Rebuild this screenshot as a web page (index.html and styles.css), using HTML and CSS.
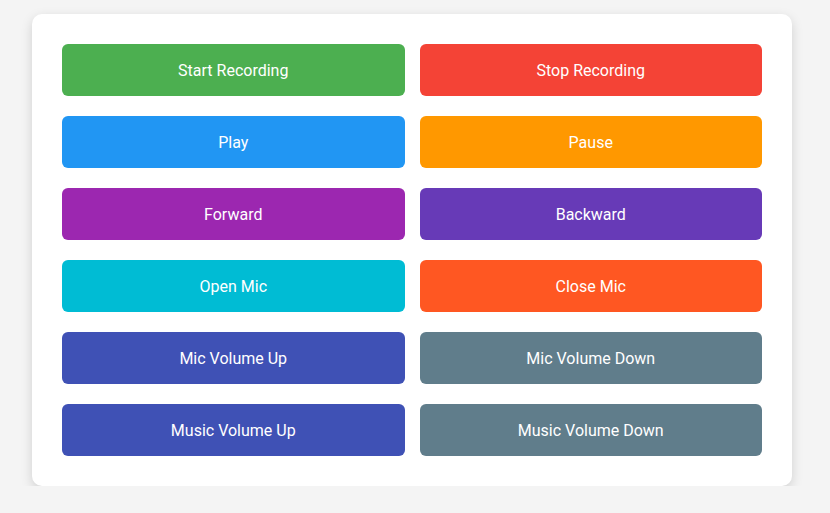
FILE: index.html
```html
<!DOCTYPE html>
<html>
<head>
<meta charset="utf-8">
<link rel="stylesheet" href="styles.css">
</head>
<body>
<div class="card">
  <div class="grid">
    <button class="btn green">Start Recording</button>
    <button class="btn red">Stop Recording</button>
    <button class="btn blue">Play</button>
    <button class="btn orange">Pause</button>
    <button class="btn purple">Forward</button>
    <button class="btn deep-purple">Backward</button>
    <button class="btn cyan">Open Mic</button>
    <button class="btn deep-orange">Close Mic</button>
    <button class="btn indigo">Mic Volume Up</button>
    <button class="btn blue-grey">Mic Volume Down</button>
    <button class="btn indigo">Music Volume Up</button>
    <button class="btn blue-grey">Music Volume Down</button>
  </div>
</div>
</body>
</html>
```
FILE: styles.css
```css
html, body {
  margin: 0;
  padding: 0;
  background: #f4f4f4;
  font-family: Roboto, "Liberation Sans", sans-serif;
}
body {
  padding: 14px 0 0 32px;
}
.card {
  width: 760px;
  box-sizing: border-box;
  padding: 30px;
  background: #fff;
  border-radius: 10px;
  box-shadow: 0 4px 12px rgba(0, 0, 0, 0.15);
}
.grid {
  display: grid;
  grid-template-columns: 1fr 1fr;
  column-gap: 15px;
  row-gap: 20px;
}
.btn {
  height: 52px;
  border: none;
  border-radius: 6px;
  color: #fff;
  font-family: Roboto, "Liberation Sans", sans-serif;
  font-size: 16px;
  display: flex;
  align-items: center;
  justify-content: center;
  padding: 0;
  cursor: pointer;
}
.green { background: #4caf50; }
.red { background: #f44336; }
.blue { background: #2196f3; }
.orange { background: #ff9800; }
.purple { background: #9c27b0; }
.deep-purple { background: #673ab7; }
.cyan { background: #00bcd4; }
.deep-orange { background: #ff5722; }
.indigo { background: #3f51b5; }
.blue-grey { background: #607d8b; }
```
